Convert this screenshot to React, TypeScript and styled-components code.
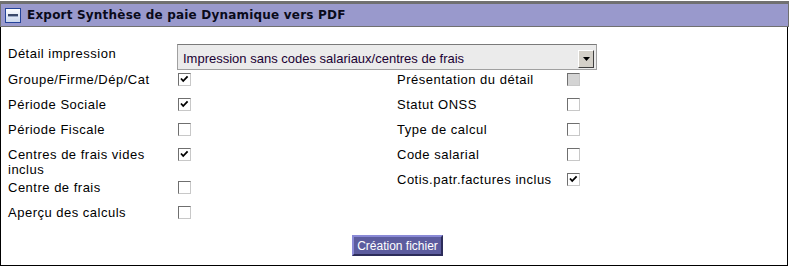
import { createGlobalStyle, styled } from 'styled-components';

type Option = { label: string; checked?: boolean; disabled?: boolean };

const leftOptions: Option[] = [
  { label: 'Groupe/Firme/Dép/Cat', checked: true },
  { label: 'Période Sociale', checked: true },
  { label: 'Période Fiscale' },
  { label: 'Centres de frais vides inclus', checked: true },
  { label: 'Centre de frais' },
  { label: 'Aperçu des calculs' },
];

const rightOptions: Option[] = [
  { label: 'Présentation du détail', disabled: true },
  { label: 'Statut ONSS' },
  { label: 'Type de calcul' },
  { label: 'Code salarial' },
  { label: 'Cotis.patr.factures inclus', checked: true },
];

const CheckBox: React.FC<{ checked?: boolean; disabled?: boolean }> = ({
  checked,
  disabled,
}) => (
  <Box $disabled={disabled}>
    {checked && (
      <svg width="11" height="11" viewBox="0 0 11 11">
        <path d="M2 4.5 L4.2 7 L8.6 2.4" fill="none" stroke="#000" strokeWidth="1.8" />
      </svg>
    )}
  </Box>
);

const CollapseIcon = () => (
  <svg width="16" height="15" viewBox="0 0 16 15">
    <defs>
      <linearGradient id="iconFill" x1="0" y1="0" x2="0" y2="1">
        <stop offset="0" stopColor="#ffffff" />
        <stop offset="1" stopColor="#c9d6ec" />
      </linearGradient>
    </defs>
    <rect x="0.5" y="0.5" width="15" height="14" fill="url(#iconFill)" stroke="#24449a" />
    <rect x="3" y="6" width="10" height="2" fill="#3c4a6a" />
    <rect x="3" y="8" width="10" height="1" fill="#9aa8c4" />
  </svg>
);

const OptionColumn: React.FC<{ options: Option[] }> = ({ options }) => (
  <Column>
    {options.map(({ label, checked, disabled }) => (
      <OptionRow key={label}>
        <Label>{label}</Label>
        <CheckBox checked={checked} disabled={disabled} />
      </OptionRow>
    ))}
  </Column>
);

const App: React.FC = () => (
  <>
    <GlobalStyle />
    <Panel>
      <Header>
        <CollapseIcon />
        <Title>Export Synthèse de paie Dynamique vers PDF</Title>
      </Header>

      <Body>
        <DetailRow>
          <DetailLabel>Détail impression</DetailLabel>
          <SelectBox>
            <Select defaultValue="sans">
              <option value="sans">Impression sans codes salariaux/centres de frais</option>
            </Select>
            <ArrowButton>
              <svg width="7" height="4" viewBox="0 0 7 4">
                <path d="M0 0 H7 L3.5 4 Z" fill="#000" />
              </svg>
            </ArrowButton>
          </SelectBox>
        </DetailRow>

        <Columns>
          <OptionColumn options={leftOptions} />
          <OptionColumn options={rightOptions} />
        </Columns>

        <Actions>
          <SubmitButton type="button">Création fichier</SubmitButton>
        </Actions>
      </Body>
    </Panel>
  </>
);

const GlobalStyle = createGlobalStyle`
  body {
    margin: 0;
    background: #fff;
    font-family: "Liberation Sans", Arial, sans-serif;
    font-size: 13px;
    color: #000;
  }
`;

const Panel = styled.section`
  width: 789px;
  padding-top: 1px;
`;

const Header = styled.header`
  height: 22px;
  display: flex;
  align-items: center;
  gap: 6px;
  padding-left: 4px;
  background: #9999cc;
  border: 1px solid #707070;
  border-top-width: 3px;
`;

const Title = styled.h2`
  margin: 0;
  font-family: "DejaVu Sans", Verdana, sans-serif;
  font-size: 12px;
  font-weight: bold;
  color: #0a0a1a;
  letter-spacing: 0.2px;
`;

const Body = styled.div`
  width: 788px;
  padding: 16px 0 9px 7px;
  border: 1px solid #000;
  border-top: none;
  box-sizing: border-box;
`;

const DetailRow = styled.div`
  display: flex;
  align-items: flex-start;
  height: 28px;
`;

const DetailLabel = styled.label`
  width: 169px;
  padding-top: 3px;
  line-height: 15px;
  letter-spacing: 0.5px;
`;

const SelectBox = styled.div`
  width: 420px;
  height: 26px;
  margin-top: 1px;
  display: flex;
  align-items: center;
  box-sizing: border-box;
  border: 1px solid #a0a0a0;
  border-top-color: #7a7a7a;
  background: #ebebeb;
`;

const Select = styled.select`
  flex: 1;
  appearance: none;
  border: none;
  outline: none;
  background: transparent;
  padding: 2px 0 0 5px;
  font-family: "Liberation Sans", Arial, sans-serif;
  font-size: 13px;
  color: #1a0033;
`;

const ArrowButton = styled.span`
  width: 14px;
  height: 16px;
  margin: 4px 2px 0 0;
  display: flex;
  align-items: center;
  justify-content: center;
  background: #d4d0c8;
  border: 1px solid;
  border-color: #ffffff #404040 #404040 #ffffff;
`;

const Columns = styled.div`
  display: grid;
  grid-template-columns: 389px 200px;
`;

const Column = styled.div`
  display: flex;
  flex-direction: column;
`;

const OptionRow = styled.div`
  display: grid;
  grid-template-columns: 170px 13px;
  align-items: start;
  min-height: 25px;
  padding: 1px 0 2px;
  box-sizing: border-box;
`;

const Label = styled.span`
  line-height: 15px;
  padding-right: 6px;
  letter-spacing: 0.5px;
`;

const Box = styled.span<{ $disabled?: boolean }>`
  width: 13px;
  height: 13px;
  margin-top: 1px;
  box-sizing: border-box;
  display: flex;
  align-items: center;
  justify-content: center;
  border: 1px solid;
  border-color: #6f6f6f #c8c8c8 #c8c8c8 #6f6f6f;
  background: ${({ $disabled }) => ($disabled ? '#d4d4d4' : '#fff')};
`;

const Actions = styled.div`
  display: flex;
  justify-content: center;
  padding: 6px 0 0 0;
`;

const SubmitButton = styled.button`
  height: 21px;
  padding: 0 3px;
  background: #5c5c9e;
  color: #fff;
  font-family: "Liberation Sans", Arial, sans-serif;
  font-size: 12px;
  border: 2px solid;
  border-color: #8a8ad6 #2c2c5a #2c2c5a #8a8ad6;
  cursor: pointer;
`;

export default App;
